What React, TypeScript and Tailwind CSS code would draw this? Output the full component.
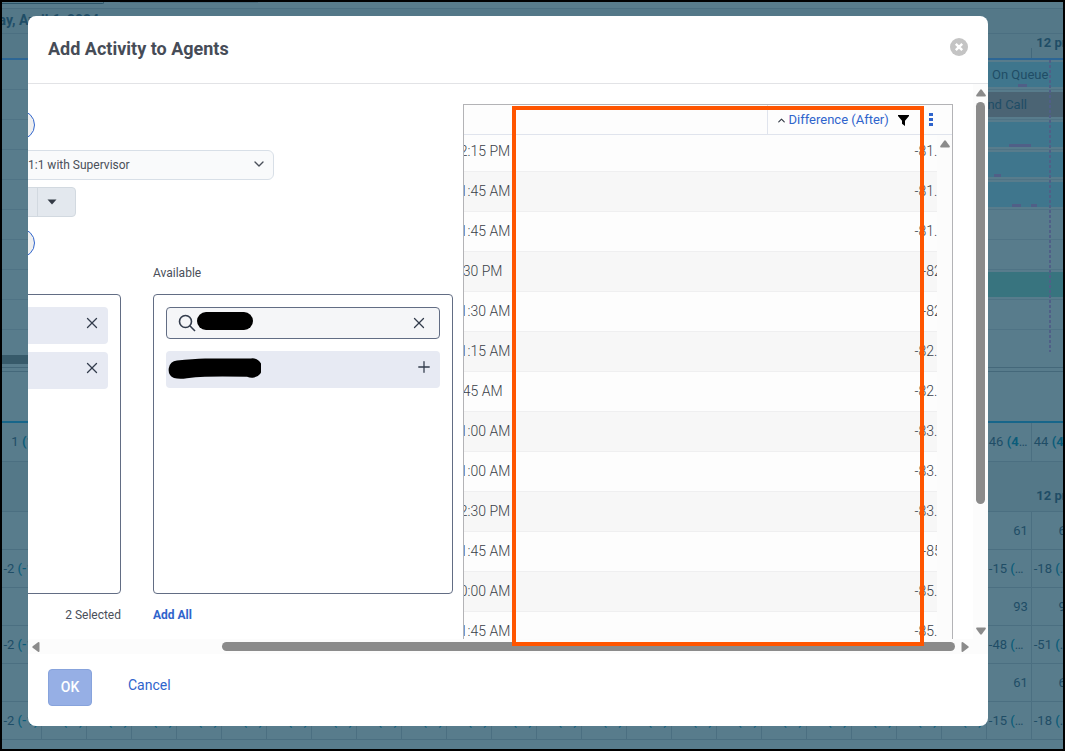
import { ChevronDown, ChevronUp, Plus, X } from "lucide-react";

const timelineRows = [
    { bar: "bg-[#3f768d]", width: "w-[78px]", label: "On Queue", align: "pl-[7px]", marks: ["right-9 w-[9px]"] },
    { bar: "bg-[#4b6474]", width: "w-[140px]", label: "Outbound Call", align: "justify-end pr-9", marks: [] },
    { bar: "bg-[#3f768d]", width: "w-[78px]", label: "", align: "", marks: ["right-8 w-[22px]"] },
    { bar: "bg-[#3f768d]", width: "w-[78px]", label: "", align: "", marks: ["right-[62px] w-[7px]"] },
    { bar: "bg-[#3f768d]", width: "w-[78px]", label: "", align: "", marks: ["right-[42px] w-[9px]", "right-[26px] w-[6px]"] },
    { bar: "", width: "", label: "", align: "", marks: [] },
    { bar: "", width: "", label: "", align: "", marks: [] },
    { bar: "bg-[#38747f]", width: "w-[78px]", label: "", align: "", marks: [] },
    { bar: "", width: "", label: "", align: "", marks: [] },
];

const columns = Array.from({ length: 24 }, (_, i) => i);

const staffingRows = [
    { left: "3", near: "61", last: "60", diff: false },
    { left: "-2 ", near: "-15 ", last: "-18 ", diff: true },
    { left: "5", near: "93", last: "91", diff: false },
    { left: "-2 ", near: "-48 ", last: "-51 ", diff: true },
    { left: "3", near: "61", last: "60", diff: false },
    { left: "-2 ", near: "-15 ", last: "-18 ", diff: true },
];

const slots = [
    { time: "12:15 PM", difference: "-81.54" },
    { time: "11:45 AM", difference: "-81.72" },
    { time: "11:45 AM", difference: "-81.76" },
    { time: "1:30 PM", difference: "-82.2" },
    { time: "11:30 AM", difference: "-82.3" },
    { time: "11:15 AM", difference: "-82.15" },
    { time: "9:45 AM", difference: "-82.11" },
    { time: "11:00 AM", difference: "-83.15" },
    { time: "11:00 AM", difference: "-83.18" },
    { time: "12:30 PM", difference: "-83.16" },
    { time: "11:45 AM", difference: "-85.1" },
    { time: "10:00 AM", difference: "-85.72" },
    { time: "11:45 AM", difference: "-85.76" },
];

function Schedule() {
    return (
        <div aria-hidden="true" className="relative text-[13px] text-[#1f4d66]">
            <div className="flex h-[7px] gap-4 border-b border-[#4b6f81]">
                <div className="h-[2px] w-[102px] rounded-br border-r border-b border-[#2b5468]" />
                <div className="h-[1px] w-[138px] bg-[#4b6f81]" />
            </div>
            <div className="flex h-[25px] items-center border-b border-[#4b6f81] bg-[#547888] text-sm font-bold">
                <span className="-ml-[45px] pb-[2px]">Saturday, April 6, 2024</span>
            </div>
            <div className="relative flex h-[26px] items-center justify-end border-b-2 border-[#2c6695] bg-[#547888] font-bold">
                <span className="-mr-[10px] pb-[6px]">12 pm</span>
                <div className="absolute right-[31px] bottom-0 h-[10px] w-px bg-[#43687b]" />
            </div>
            <div className="relative">
                {timelineRows.map((row, i) => (
                    <div key={i} className="relative flex h-[30px] items-center justify-end border-b border-[#4f7385]">
                        <div className={`flex h-[25px] items-center ${row.bar} ${row.width} ${row.align}`}>
                            {row.label}
                        </div>
                        {row.marks.map((mark) => (
                            <div key={mark} className={`absolute bottom-[2px] h-[3px] bg-[#505f87] ${mark}`} />
                        ))}
                    </div>
                ))}
                <div className="absolute top-0 right-[12px] h-[292px] w-[2px] bg-[repeating-linear-gradient(#505f87_0_3px,transparent_3px_5px)]" />
            </div>
            <div className="flex h-[38px] items-center border-b border-[#44687a] pt-[22px]">
                <div className="h-[9px] w-[200px] bg-[#375a6a]" />
            </div>
            <div className="h-1 border-b border-[#44687a]" />
            <div className="h-[51px] border-b-2 border-[#17668a]" />
            <table className="-ml-[5px] w-[1080px] table-fixed">
                <tbody>
                    <tr className="h-[38px]">
                        {columns.map((col) => (
                            <td key={col} className="truncate border-r border-b border-[#4b6f81] pr-[3px] pl-[2px] text-right">
                                {col < 22 ? "1 " : col === 22 ? "46 " : "44 "}
                                <b className="text-[#0b5c7a]">{col < 22 ? "(1)" : "(42)"}</b>
                            </td>
                        ))}
                    </tr>
                    <tr className="h-[50px] bg-[#547888] font-bold">
                        <td colSpan={23} className="border-b border-[#4b6f81]" />
                        <td className="border-b border-[#4b6f81] pt-5 pl-[5px] whitespace-nowrap">12 pm</td>
                    </tr>
                    {staffingRows.map((row, i) => (
                        <tr key={i} className="h-[38px]">
                            {columns.map((col) => (
                                <td key={col} className="truncate border-r border-b border-[#4b6f81] pt-[2px] pr-[3px] pl-[2px] text-right">
                                    {col < 22 ? row.left : col === 22 ? row.near : row.last}
                                    {row.diff && <b className="font-medium text-[#0b5c7a]">{col < 22 ? "(-1)" : "(−12)"}</b>}
                                </td>
                            ))}
                        </tr>
                    ))}
                </tbody>
            </table>
        </div>
    );
}

function Arrow({ className }: { className: string }) {
    return (
        <svg viewBox="0 0 10 8" className={`h-2 w-[10px] shrink-0 fill-[#8b8b8b] ${className}`}>
            <path d="M4.2.7Q5-.2 5.8.7L9.7 6q.6 1.5-.7 1.5H1Q-.3 7.500.3 6Z" />
        </svg>
    );
}

function ActivityForm() {
    return (
        <div className="w-[435px] shrink-0 overflow-hidden pt-[26px] text-xs text-[#4a4f59]">
            <button
                type="button"
                aria-label="Activity step"
                className="-ml-[23px] block size-[30px] rounded-full border border-[#2f64cc] bg-[#efefef]"
            />
            <div className="relative mt-[10px] -ml-3 w-[258px]">
                <select
                    aria-label="Activity"
                    className="h-[30px] w-full appearance-none rounded-md border border-[#d8dfe7] bg-[#f9fafb] pl-[11px]"
                >
                    <option>1:1 with Supervisor</option>
                </select>
                <ChevronDown className="pointer-events-none absolute top-[6px] right-[7px] size-4" />
            </div>
            <div className="mt-[7px] -ml-3 flex h-[30px] w-[60px] rounded border border-[#d2d9e0] bg-[#e3e8ee]">
                <button type="button" aria-label="Default action" className="w-5" />
                <button
                    type="button"
                    aria-label="More actions"
                    className="flex w-[39px] items-center border-l border-[#d2d9e0] pl-[9px]"
                >
                    <svg viewBox="0 0 10 6" className="h-[6px] w-[10px] fill-[#333a45]">
                        <path d="M.5.5h9L5 5.500Z" />
                    </svg>
                </button>
            </div>
            <button
                type="button"
                aria-label="Agents step"
                className="mt-[11px] -ml-[23px] block size-[30px] rounded-full border border-[#2f64cc] bg-[#efefef]"
            />
            <div className="mt-[7px] flex h-[29px] gap-8">
                <div className="w-[93px]" />
                <p className="leading-4">Available</p>
            </div>
            <div className="flex gap-8">
                <div className="w-[93px]">
                    <ul className="-ml-3 flex h-[300px] flex-col gap-2 rounded border border-[#626d84] py-3 pr-3 text-[#333c4c]">
                        {["first", "second"].map((name) => (
                            <li key={name} className="flex h-[37px] items-center justify-end rounded bg-[#e7eaf3] pr-[7px] pb-[6px]">
                                <button type="button" aria-label={`Remove ${name} agent`}>
                                    <X className="size-[18px]" strokeWidth={1.7} />
                                </button>
                            </li>
                        ))}
                    </ul>
                    <p className="mt-[13px] text-right leading-4">2 Selected</p>
                </div>
                <div className="w-[300px]">
                    <div className="h-[300px] rounded border border-[#626d84] p-3 text-[#333c4c]">
                        <div className="relative">
                            <input
                                type="text"
                                aria-label="Search agents"
                                className="block h-8 w-full rounded border border-[#626d84] bg-[#f5f6f8] pl-8"
                            />
                            <svg
                                viewBox="0 0 18 18"
                                className="absolute top-[7px] left-3 size-[18px] fill-none stroke-current"
                                strokeWidth="1.6"
                            >
                                <circle cx="7.500" cy="7.500" r="6" />
                                <path d="M11.800 11.800L17 17" />
                            </svg>
                            <div className="absolute top-[5px] left-[31px] h-[18px] w-[56px] rounded-full bg-black" />
                            <button type="button" aria-label="Clear search" className="absolute top-[7px] right-3">
                                <X className="size-[18px]" strokeWidth={1.7} />
                            </button>
                        </div>
                        <div className="mt-3 flex h-[37px] items-center justify-between rounded bg-[#e7eaf3] pr-[7px] pl-px">
                            <svg viewBox="0 0 94 21" className="mb-[2px] h-[21px] w-[94px] fill-black">
                                <path d="M10 2.500Q26 .8 38 .5H84a9.500 9.500 0 0 1 3 19q-3 1-7-.8-28-.6-42 0-10 0-18 1.600Q12 21.500 7 20A9.200 9.200 0 0 1 10 2.500Z" />
                            </svg>
                            <button type="button" aria-label="Add agent" className="pb-[6px]">
                                <Plus className="size-[18px]" strokeWidth={1.7} />
                            </button>
                        </div>
                    </div>
                    <button type="button" className="mt-[13px] block leading-4 font-bold text-[#2f64cc]">
                        Add All
                    </button>
                </div>
            </div>
        </div>
    );
}

function SlotTable() {
    return (
        <div className="relative mt-5 mr-5 min-w-0 flex-1 overflow-hidden border-x border-t border-[#b3b3b6]">
            <table className="w-[calc(100%+4px)] table-fixed text-sm">
                <thead>
                    <tr className="h-[29px] border-b border-[#e0e4ed] bg-[#fdfdfd]">
                        <th aria-label="Start time" />
                        <th className="w-[189px] border-l border-[#e0e4ed] p-0">
                            <div className="flex items-center pt-[2px] pl-2 text-[13px] font-normal text-[#2f64cc]">
                                <ChevronUp className="size-[11px] text-[#333a45]" strokeWidth={2.500} />
                                <span className="pl-[2px]">Difference (After)</span>
                                <button type="button" aria-label="Filter" className="ml-[9px]">
                                    <svg viewBox="0 0 11 11" className="size-[11px] fill-black">
                                        <path d="M0 0H11V1L7 5.800V11L4 8.700V5.800L0 1Z" />
                                    </svg>
                                </button>
                                <button type="button" aria-label="Column menu" className="ml-5 pb-[3px]">
                                    <svg viewBox="0 0 4 14" className="h-[14px] w-1 fill-[#2f64cc]">
                                        <path d="M0 1h4v3H0zM0 6h4v3H0zM0 11h4v3H0z" />
                                    </svg>
                                </button>
                            </div>
                        </th>
                    </tr>
                </thead>
                <tbody className="font-light text-[#3a3f48]">
                    {slots.map((slot, i) => (
                        <tr
                            key={i}
                            className="h-10 border-b border-[#efeff0] bg-[#fdfdfd] first:h-[37px] first:align-top even:bg-[#f7f7f7]"
                        >
                            <td className="p-0">
                                <div className="-ml-3 leading-8">{slot.time}</div>
                            </td>
                            <td className="p-0 pr-[3px] text-right leading-8">{slot.difference}</td>
                        </tr>
                    ))}
                </tbody>
            </table>
            <div className="absolute top-[30px] right-0 bottom-0 flex w-[15px] justify-center bg-[#fcfcfc] pt-[5px]">
                <Arrow className="" />
            </div>
        </div>
    );
}

export default function App() {
    return (
        <div className="relative h-screen overflow-hidden border-2 border-black bg-[#587c8c] font-[Roboto,sans-serif]">
            <Schedule />
            <div className="absolute inset-0 pt-[14px] pr-[75px] pb-[23px] pl-[26px]">
                <div
                    role="dialog"
                    aria-labelledby="dialog-title"
                    className="flex h-full flex-col overflow-hidden rounded-lg bg-white"
                >
                    <header className="flex h-[68px] shrink-0 items-center justify-between border-b border-[#e2e3e6] px-5 pb-[2px]">
                        <h1 id="dialog-title" className="text-lg font-bold text-[#464c57]">
                            Add Activity to Agents
                        </h1>
                        <button type="button" aria-label="Close" className="pb-1">
                            <svg viewBox="0 0 18 18" className="size-[18px]">
                                <circle cx="9" cy="9" r="9" fill="#c4c4c4" />
                                <path d="M5.800 5.800l6.400 6.400M12.200 5.800l-6.400 6.400" stroke="#fff" strokeWidth="2.400" />
                            </svg>
                        </button>
                    </header>

                    <div className="relative flex min-h-0 flex-1 flex-col">
                        <div className="flex min-h-0 flex-1">
                            <ActivityForm />
                            <SlotTable />
                            <div className="flex w-[15px] flex-col items-center bg-[#fcfcfc] pt-[5px] pb-1">
                                <Arrow className="" />
                                <div className="mt-[5px] h-[402px] w-[9px] rounded-full bg-[#8b8b8b]" />
                                <Arrow className="mt-auto rotate-180" />
                            </div>
                        </div>
                        <div className="flex h-[15px] items-center bg-[#fcfcfc] pr-[18px] pl-[3px]">
                            <Arrow className="-rotate-90" />
                            <div className="ml-[181px] h-[9px] flex-1 rounded-full bg-[#8b8b8b]" />
                            <Arrow className="ml-[5px] rotate-90" />
                        </div>
                        <div className="pointer-events-none absolute top-[22px] right-16 bottom-2 left-[484px] border-4 border-[#ff5500]" />
                    </div>

                    <footer className="flex shrink-0 items-center px-5 pt-[15px] pb-5 text-sm">
                        <button
                            type="button"
                            className="h-[37px] w-11 rounded border border-[#87a3dc] bg-[#96afe5] pb-[2px] font-medium text-white"
                        >
                            OK
                        </button>
                        <button type="button" className="ml-9 pb-[5px] text-[#2f64cc]">
                            Cancel
                        </button>
                    </footer>
                </div>
            </div>
        </div>
    );
}
